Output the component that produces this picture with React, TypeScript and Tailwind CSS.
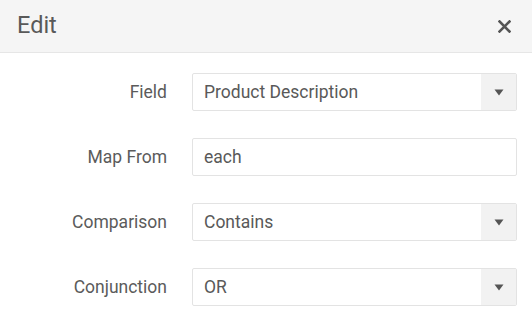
import React from "react";

const Arrow = () => (
  <div className="w-[35px] h-full bg-[#f2f2f2] flex items-center justify-center">
    <svg width="10" height="7" viewBox="0 0 10 7">
      <path d="M0.5 0.5 L9.5 0.5 L5 6.5 Z" fill="#555" />
    </svg>
  </div>
);

function Row({ label, value, select }: { label: string; value: string; select?: boolean }) {
  return (
    <div className="flex items-center h-[38px]">
      <div className="w-[167px] text-right text-[17.5px] text-[#5b5b5b]">{label}</div>
      <div className="ml-[25px] mr-[15px] flex-1 h-[38px] border border-[#e3e3e3] rounded-[2px] flex items-stretch bg-white">
        <div className="flex-1 flex items-center pl-[11px] text-[17.5px] text-[#595959]">{value}</div>
        {select && <Arrow />}
      </div>
    </div>
  );
}

export default function App() {
  return (
    <div className="w-[532px] h-[331px] bg-white" style={{ fontFamily: "Roboto, sans-serif" }}>
      <div className="h-[53px] bg-[#f5f5f5] border-b border-[#e6e6e6] flex items-center justify-between pl-[17px] pr-[21px]">
        <span className="text-[23.5px] text-[#595959]">Edit</span>
        <svg width="13" height="13" viewBox="0 0 13 13">
          <path d="M1.5 1.5 L11.5 11.5 M11.5 1.5 L1.5 11.5" stroke="#555" strokeWidth="2.6" strokeLinecap="square" />
        </svg>
      </div>
      <div className="pt-[20px] flex flex-col gap-[27px]">
        <Row label="Field" value="Product Description" select />
        <Row label="Map From" value="each" />
        <Row label="Comparison" value="Contains" select />
        <Row label="Conjunction" value="OR" select />
      </div>
    </div>
  );
}
